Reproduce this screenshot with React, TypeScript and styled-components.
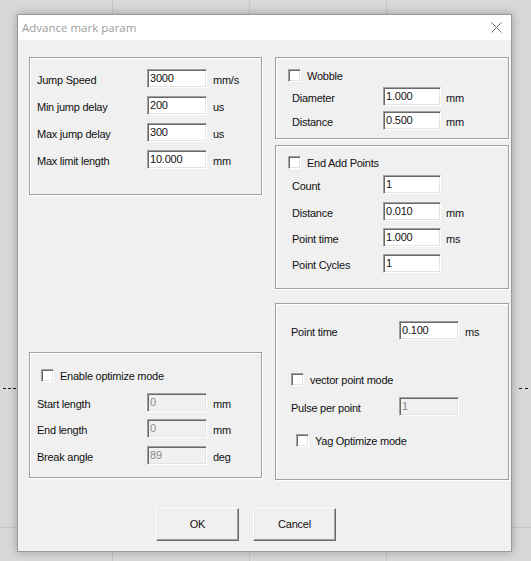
import React from "react";
import styled, { createGlobalStyle } from "styled-components";

const GlobalStyle = createGlobalStyle`
  html, body { margin: 0; padding: 0; }
  body { font-family: "Liberation Sans", Arial, sans-serif; }
  * { box-sizing: border-box; }
`;

const UI_FONT = `"Liberation Sans", Arial, sans-serif`;

const Desktop = styled.div`
  position: relative;
  width: 531px;
  height: 561px;
  overflow: hidden;
  background: #d8d8d8;
`;

const Canvas = styled.svg`
  position: absolute;
  left: 0;
  top: 0;
`;

const Window = styled.div`
  position: absolute;
  left: 17px;
  top: 14px;
  width: 495px;
  height: 538px;
  border: 1px solid #9a9a9a;
  background: #f0f0f0;
  box-shadow: 0 0 9px rgba(0, 0, 0, 0.28);
  display: flex;
  flex-direction: column;
`;

const TitleBar = styled.div`
  height: 25px;
  flex: none;
  background: #ffffff;
  display: flex;
  align-items: center;
  justify-content: space-between;
  padding: 0 9px 0 4px;
`;

const TitleText = styled.span`
  font-family: "Open Sans", "Noto Sans", sans-serif;
  font-size: 11.5px;
  color: #9c9c9c;
  padding-bottom: 1px;
`;

const CloseIcon = styled.svg`
  display: block;
`;

const Client = styled.div`
  flex: 1;
  display: flex;
  flex-direction: column;
  padding: 17px 2px 10px 11px;
`;

const Columns = styled.div`
  display: grid;
  grid-template-columns: 233px 234px;
  column-gap: 13px;
  height: 423px;
`;

const LeftColumn = styled.div`
  display: flex;
  flex-direction: column;
  justify-content: space-between;
  padding-bottom: 2px;
`;

const RightColumn = styled.div`
  display: flex;
  flex-direction: column;
`;

const Group = styled.div<{ $h: number; $pt: number; $pl: number; $mt?: number }>`
  height: ${(p) => p.$h}px;
  margin-top: ${(p) => p.$mt ?? 0}px;
  border: 1px solid #a0a0a0;
  box-shadow: inset 1px 1px 0 #ffffff, 1px 1px 0 #ffffff;
  padding: ${(p) => p.$pt}px 0 0 ${(p) => p.$pl}px;
  display: flex;
  flex-direction: column;
  align-items: flex-start;
`;

const FieldRow = styled.div<{ $lw: number; $iw: number; $mt?: number; $ug: number }>`
  display: grid;
  grid-template-columns: ${(p) => p.$lw}px ${(p) => p.$iw}px auto;
  align-items: center;
  margin-top: ${(p) => p.$mt ?? 0}px;
  height: 19px;
  & > span:last-child {
    margin-left: ${(p) => p.$ug}px;
  }
`;

const Label = styled.span`
  font-family: ${UI_FONT};
  font-size: 11px;
  letter-spacing: -0.25px;
  color: #111;
  padding-top: 3px;
  white-space: nowrap;
`;

const Unit = styled.span`
  font-family: ${UI_FONT};
  font-size: 11px;
  letter-spacing: -0.25px;
  color: #111;
  padding-top: 3px;
  white-space: nowrap;
`;

const TextBox = styled.input<{ $disabled?: boolean }>`
  width: 100%;
  height: 19px;
  margin: 0;
  padding: 0 0 1px 2px;
  font-family: ${UI_FONT};
  font-size: 11px;
  letter-spacing: -0.2px;
  color: ${(p) => (p.$disabled ? "#8a8a8a" : "#111")};
  background: ${(p) => (p.$disabled ? "#f0f0f0" : "#ffffff")};
  border-style: solid;
  border-width: 1px;
  border-color: #a0a0a0 #ffffff #ffffff #a0a0a0;
  box-shadow: inset 1px 1px 0 #696969, inset -1px -1px 0 #e3e3e3;
  outline: none;
`;

const CheckRow = styled.label<{ $ml?: number; $mt?: number }>`
  display: flex;
  align-items: center;
  gap: 6px;
  height: 13px;
  margin-left: ${(p) => p.$ml ?? 0}px;
  margin-top: ${(p) => p.$mt ?? 0}px;
  font-family: ${UI_FONT};
  font-size: 11px;
  letter-spacing: -0.25px;
  color: #111;
  white-space: nowrap;
`;

const CheckBox = styled.span`
  width: 13px;
  height: 13px;
  flex: none;
  background: #ffffff;
  border-style: solid;
  border-width: 1px;
  border-color: #a0a0a0 #ffffff #ffffff #a0a0a0;
  box-shadow: inset 1px 1px 0 #696969, inset -1px -1px 0 #e3e3e3;
`;

const ButtonRow = styled.div`
  display: flex;
  gap: 14px;
  margin-top: 28px;
  padding-left: 127px;
`;

const Button = styled.button`
  width: 83px;
  height: 33px;
  margin: 0;
  padding: 0 0 1px 0;
  font-family: ${UI_FONT};
  font-size: 11px;
  letter-spacing: -0.2px;
  color: #111;
  background: #f0f0f0;
  border-style: solid;
  border-width: 1px;
  border-color: #ffffff #696969 #696969 #ffffff;
  box-shadow: inset -1px -1px 0 #a0a0a0, inset 1px 1px 0 #e3e3e3;
  cursor: default;
`;

type Field = { label: string; value: string; unit?: string; disabled?: boolean; mt?: number };

const Fields: React.FC<{ fields: Field[]; lw: number; iw: number; ug: number }> = ({ fields, lw, iw, ug }) => (
  <>
    {fields.map((f) => (
      <FieldRow key={f.label} $lw={lw} $iw={iw} $mt={f.mt} $ug={ug}>
        <Label>{f.label}</Label>
        <TextBox readOnly defaultValue={f.value} $disabled={f.disabled} />
        <Unit>{f.unit ?? ""}</Unit>
      </FieldRow>
    ))}
  </>
);

const Check: React.FC<{ text: string; ml?: number; mt?: number }> = ({ text, ml, mt }) => (
  <CheckRow $ml={ml} $mt={mt}>
    <CheckBox />
    {text}
  </CheckRow>
);

export default function App() {
  return (
    <>
      <GlobalStyle />
      <Desktop>
        <Canvas width="531" height="561" viewBox="0 0 531 561">
          <g stroke="#c6c6c6" strokeWidth="1">
            <line x1="112.5" y1="0" x2="112.5" y2="561" />
            <line x1="249.5" y1="0" x2="249.5" y2="561" />
            <line x1="386.5" y1="0" x2="386.5" y2="561" />
            <line x1="0" y1="527.5" x2="531" y2="527.5" />
          </g>
          <g stroke="#1a1a1a" strokeWidth="1">
            <line x1="3" y1="388.5" x2="6" y2="388.5" />
            <line x1="8" y1="388.5" x2="11" y2="388.5" />
            <line x1="13" y1="388.5" x2="16" y2="388.5" />
            <line x1="519" y1="388.5" x2="522" y2="388.5" />
            <line x1="525" y1="388.5" x2="528" y2="388.5" />
          </g>
        </Canvas>
        <Window>
          <TitleBar>
            <TitleText>Advance mark param</TitleText>
            <CloseIcon width="11" height="11" viewBox="0 0 11 11">
              <path d="M0.5 0.5 L10.5 10.5 M10.5 0.5 L0.5 10.5" stroke="#6e6e6e" strokeWidth="1" fill="none" />
            </CloseIcon>
          </TitleBar>
          <Client>
            <Columns>
              <LeftColumn>
                <Group $h={138} $pt={11} $pl={7}>
                  <Fields
                    lw={110}
                    iw={60}
                    ug={6}
                    fields={[
                      { label: "Jump Speed", value: "3000", unit: "mm/s" },
                      { label: "Min jump delay", value: "200", unit: "us", mt: 8 },
                      { label: "Max jump delay", value: "300", unit: "us", mt: 8 },
                      { label: "Max limit length", value: "10.000", unit: "mm", mt: 8 },
                    ]}
                  />
                </Group>
                <Group $h={126} $pt={16} $pl={7}>
                  <Check text="Enable optimize mode" ml={4} />
                  <Fields
                    lw={110}
                    iw={60}
                    ug={6}
                    fields={[
                      { label: "Start length", value: "0", unit: "mm", disabled: true, mt: 11 },
                      { label: "End length", value: "0", unit: "mm", disabled: true, mt: 7 },
                      { label: "Break angle", value: "89", unit: "deg", disabled: true, mt: 8 },
                    ]}
                  />
                </Group>
              </LeftColumn>
              <RightColumn>
                <Group $h={82} $pt={11} $pl={16}>
                  <Check text="Wobble" ml={-4} />
                  <Fields
                    lw={91}
                    iw={58}
                    ug={5}
                    fields={[
                      { label: "Diameter", value: "1.000", unit: "mm", mt: 5 },
                      { label: "Distance", value: "0.500", unit: "mm", mt: 5 },
                    ]}
                  />
                </Group>
                <Group $h={144} $pt={10} $pl={16} $mt={6}>
                  <Check text="End Add Points" ml={-4} />
                  <Fields
                    lw={91}
                    iw={58}
                    ug={5}
                    fields={[
                      { label: "Count", value: "1", mt: 6 },
                      { label: "Distance", value: "0.010", unit: "mm", mt: 8 },
                      { label: "Point time", value: "1.000", unit: "ms", mt: 7 },
                      { label: "Point Cycles", value: "1", mt: 7 },
                    ]}
                  />
                </Group>
                <Group $h={177} $pt={17} $pl={15} $mt={14}>
                  <Fields
                    lw={108}
                    iw={60}
                    ug={6}
                    fields={[{ label: "Point time", value: "0.100", unit: "ms" }]}
                  />
                  <Check text="vector point mode" mt={33} />
                  <Fields
                    lw={108}
                    iw={60}
                    ug={6}
                    fields={[{ label: "Pulse per point", value: "1", disabled: true, mt: 11 }]}
                  />
                  <Check text="Yag Optimize mode" ml={5} mt={18} />
                </Group>
              </RightColumn>
            </Columns>
            <ButtonRow>
              <Button>OK</Button>
              <Button>Cancel</Button>
            </ButtonRow>
          </Client>
        </Window>
      </Desktop>
    </>
  );
}
